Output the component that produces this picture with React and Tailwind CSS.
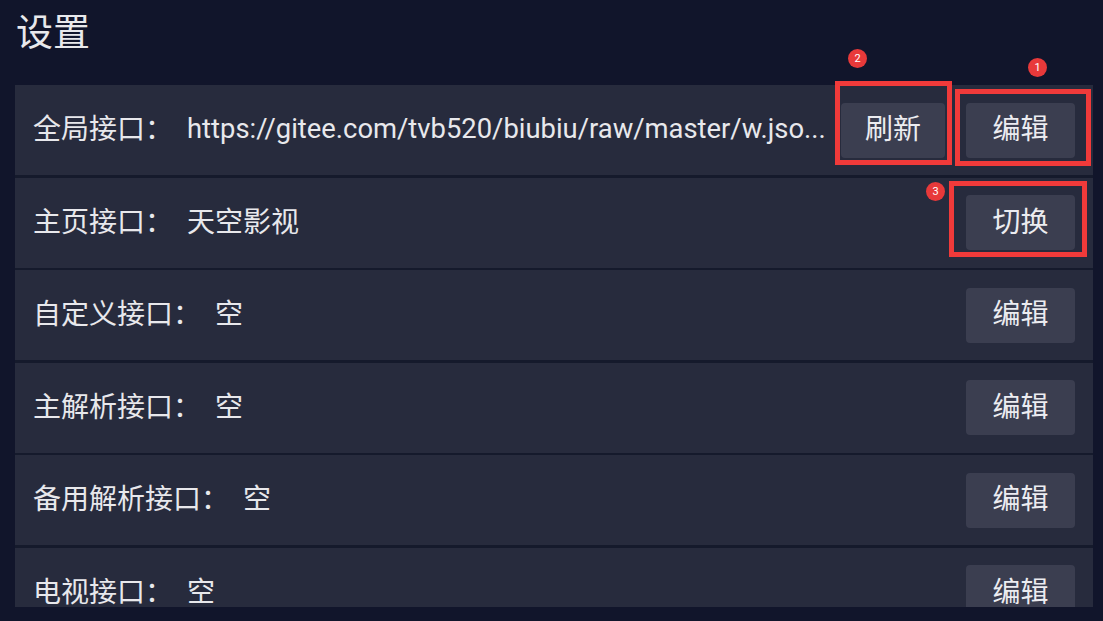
import React from "react";

const rows = [
  { label: "全局接口：", value: "https://gitee.com/tvb520/biubiu/raw/master/w.jso...", url: true, buttons: ["刷新", "编辑"] },
  { label: "主页接口：", value: "天空影视", buttons: ["切换"] },
  { label: "自定义接口：", value: "空", buttons: ["编辑"] },
  { label: "主解析接口：", value: "空", buttons: ["编辑"] },
  { label: "备用解析接口：", value: "空", buttons: ["编辑"] },
  { label: "电视接口：", value: "空", buttons: ["编辑"] },
];

// annotation marks drawn over the screenshot
const marks = [
  { n: "1", box: "left-[955px] top-[89px] w-[136px] h-[77px]", dot: "left-[1028px] top-[58px]" },
  { n: "2", box: "left-[835px] top-[81px] w-[117px] h-[84px]", dot: "left-[848px] top-[49px]" },
  { n: "3", box: "left-[949px] top-[181px] w-[138px] h-[76px]", dot: "left-[926px] top-[182px]" },
];

function Row({ label, value, url, buttons }) {
  return (
    <div className="h-[90px] shrink-0 bg-[#272b3d] flex items-center pl-[18px] pr-[18px]">
      <span className="shrink-0">{label}</span>
      <span
        className={
          "ml-[14px] min-w-0 flex-1 whitespace-nowrap overflow-hidden " + (url ? "text-[27.4px]" : "")
        }
      >
        {value}
      </span>
      <div className="flex items-center gap-[21px] ml-[4px] shrink-0">
        {buttons.map((b) => (
          <button
            key={b}
            className={
              "h-[55px] rounded-[4px] bg-[#3b3e50] text-[#ececf0] text-[28px] leading-none flex items-center justify-center " +
              (b === "刷新" ? "w-[104px]" : "w-[109px]")
            }
          >
            {b}
          </button>
        ))}
      </div>
    </div>
  );
}

export default function App() {
  return (
    <div
      className="relative w-[1103px] h-[621px] overflow-hidden bg-[#11152b] text-[#e8e8ec]"
      style={{ fontFamily: "Roboto, 'Noto Sans CJK SC', sans-serif" }}
    >
      <div className="h-[85px] pl-[16px] pt-[12px]">
        <h1 className="text-[37px] leading-[44px]">设置</h1>
      </div>

      <div className="ml-[15px] mr-[10px] h-[522px] overflow-hidden flex flex-col gap-[2.6px] bg-[#151a2c] text-[28px]">
        {rows.map((r) => (
          <Row key={r.label} {...r} />
        ))}
      </div>

      {marks.map((m) => (
        <React.Fragment key={m.n}>
          <div className={"absolute border-[5px] border-[#f03a3a] " + m.box} />
          <div
            className={
              "absolute w-[19px] h-[19px] rounded-full bg-[#e8393a] text-white text-[11px] leading-none flex items-center justify-center " +
              m.dot
            }
          >
            {m.n}
          </div>
        </React.Fragment>
      ))}
    </div>
  );
}
